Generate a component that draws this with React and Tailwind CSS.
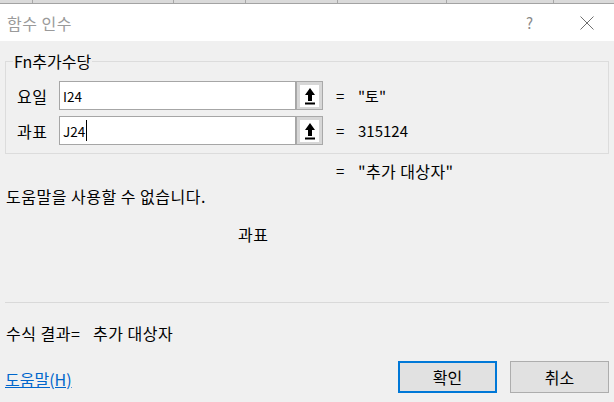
import React from 'react';

const font = { fontFamily: '"Noto Sans CJK KR", "Noto Sans", sans-serif' };

const RefButton = () => (
    <div className="w-[27px] h-[29px] border border-[#a9a9a9] bg-[#d7d7d7] pl-[3px] pt-[3px] pr-[3px] pb-[2px] shrink-0">
        <div className="w-full h-full bg-white flex items-center justify-center">
            <svg width="10" height="17" viewBox="0 0 10 17">
                <polygon points="5,0 0,7 3,7 3,13 7,13 7,7 10,7" fill="#000" />
                <rect x="0" y="14.5" width="10" height="2" fill="#000" />
            </svg>
        </div>
    </div>
);

const ArgRow = ({ label, value, result, caret }) => (
    <div className="flex items-center h-[29px]">
        <div className="w-[42px] text-[16px] leading-5 tracking-[0.5px] text-black">{label}</div>
        <div className="w-[237px] h-[29px] border border-[#a6a6a6] bg-white flex items-center pl-[3px] text-[13.5px] leading-5 text-black">
            <span>{value}</span>
            {caret && <span className="inline-block w-px h-[21px] bg-black ml-px"></span>}
        </div>
        <RefButton />
        <div className="pl-[13px] w-[35px] text-[15px] leading-5 text-black">=</div>
        <div className="text-[15px] leading-5 text-black">{result}</div>
    </div>
);

const App = () => {
    const gridLines = [32, 173, 245, 337, 446, 553];

    return (
        <div className="w-[614px] h-[402px] flex flex-col overflow-hidden bg-[#f0f0f0]" style={font}>
            {/* spreadsheet strip behind the dialog */}
            <div className="relative h-[4px] bg-[#dadada] border-b border-[#a3a3a3] shrink-0">
                {gridLines.map((x) => (
                    <div key={x} className="absolute top-0 h-[3px] w-px bg-[#a8a8a8]" style={{ left: x }}></div>
                ))}
            </div>

            {/* Title bar */}
            <div className="h-[37px] bg-white flex items-center shrink-0">
                <div className="pl-[7px] text-[16px] leading-5 tracking-[0.5px] text-[#9a9a9a] flex-1">함수 인수</div>
                <div className="text-[15px] leading-5 text-[#8a8a8a] mr-[47px]">?</div>
                <svg width="14" height="14" viewBox="0 0 14 14" className="mr-[20px]">
                    <line x1="0.5" y1="0.5" x2="13.5" y2="13.5" stroke="#6f6f6f" strokeWidth="1" />
                    <line x1="13.5" y1="0.5" x2="0.5" y2="13.5" stroke="#6f6f6f" strokeWidth="1" />
                </svg>
            </div>

            {/* Body */}
            <div className="flex flex-col flex-1">
                <fieldset className="mx-[5px] mt-[10px] border border-[#dcdcdc] pt-[10px] pb-[8px]">
                    <legend className="ml-[7px] px-px text-[16px] leading-5 text-black">Fn추가수당</legend>
                    <div className="flex flex-col gap-[6px] pl-[11px]">
                        <ArgRow label="요일" value="I24" result={'"토"'} />
                        <ArgRow label="과표" value="J24" result="315124" caret />
                    </div>
                </fieldset>

                <div className="flex mt-[7px] h-5 text-[15px] leading-5 text-black">
                    <div className="pl-[336px] w-[358px]">=</div>
                    <div className="text-[16px] tracking-[0.4px]">"추가 대상자"</div>
                </div>

                <div className="mt-[5px] pl-[6px] h-5 text-[16px] leading-5 tracking-[0.5px] text-black">도움말을 사용할 수 없습니다.</div>

                <div className="mt-[18px] pl-[238px] h-5 text-[16px] leading-5 tracking-[0.5px] text-black">과표</div>

                <div className="mt-[58px] mx-[5px] h-px bg-[#d9d9d9]"></div>

                <div className="mt-[20px] flex pl-[6px] h-5 text-[16px] leading-5 tracking-[0.5px] text-black">
                    <div className="w-[87px]">수식 결과=</div>
                    <div>추가 대상자</div>
                </div>

                <div className="mt-[18px] flex items-center pl-[5px] pr-[5px]">
                    <a href="#" className="flex-1 pt-[3px] text-[16px] leading-5 text-[#0066cc] underline">도움말(H)</a>
                    <button className="w-[99px] h-[32px] border-2 border-[#0078d7] bg-[#e1e1e1] text-[16px] leading-5 text-black">확인</button>
                    <button className="ml-[13px] w-[99px] h-[32px] border border-[#adadad] bg-[#e1e1e1] text-[16px] leading-5 text-black">취소</button>
                </div>
            </div>
        </div>
    );
};

export default App;
